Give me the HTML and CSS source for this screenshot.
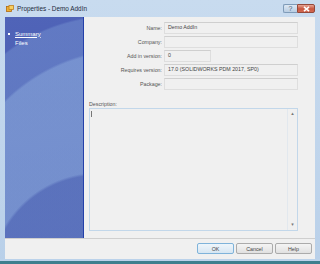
FILE: index.html
```html
<!DOCTYPE html>
<html lang="en">
<head>
  <meta charset="UTF-8">
  <title>Properties - Demo AddIn</title>
  <link rel="stylesheet" href="styles.css">
</head>
<body>

  <div class="window">
    <div class="titlebar">
      <svg class="app-icon" width="8" height="8" viewBox="0 0 8 8">
        <rect x="0.5" y="1.5" width="5" height="5" fill="#f0b030" stroke="#b06a10" stroke-width="0.8"/>
        <rect x="3" y="0.5" width="4.5" height="4" fill="#f7d060" stroke="#c08020" stroke-width="0.8"/>
      </svg>
      <span class="title">Properties - Demo AddIn</span>
      <div class="caption-buttons">
        <div class="cap-btn help-btn">?</div>
        <div class="cap-btn close-btn">
          <svg width="7" height="6" viewBox="0 0 7 6">
            <path d="M1 0.8 L6 5.2 M6 0.8 L1 5.2" stroke="#fff" stroke-width="1.6"/>
          </svg>
        </div>
      </div>
    </div>

    <div class="client">
      <div class="main">
        <div class="sidebar">
          <div class="nav-item active"><span class="bullet"></span><span class="link">Summary</span></div>
          <div class="nav-item"><span class="bullet empty"></span><span>Files</span></div>
        </div>

        <div class="content">
          <div class="row">
            <label>Name:</label>
            <div class="field">Demo AddIn</div>
          </div>
          <div class="row">
            <label>Company:</label>
            <div class="field"></div>
          </div>
          <div class="row">
            <label>Add in version:</label>
            <div class="field short">0</div>
          </div>
          <div class="row">
            <label>Requires version:</label>
            <div class="field">17.0 (SOLIDWORKS PDM 2017, SP0)</div>
          </div>
          <div class="row">
            <label>Package:</label>
            <div class="field"></div>
          </div>

          <div class="desc-label">Description:</div>
          <div class="desc-box">
            <div class="desc-text"><span class="caret"></span></div>
            <div class="scrollbar">
              <span class="arrow">&#9652;</span>
              <span class="arrow">&#9662;</span>
            </div>
          </div>
        </div>
      </div>

      <div class="footer">
        <button class="btn default">OK</button>
        <button class="btn">Cancel</button>
        <button class="btn">Help</button>
      </div>
    </div>
    <div class="bottom-frame"></div>
  </div>

</body>
</html>
```

FILE: styles.css
```css
html, body {
  margin: 0;
  padding: 0;
  width: 320px;
  height: 264px;
  overflow: hidden;
  font-family: 'Liberation Sans', 'DejaVu Sans', sans-serif;
}

.window {
  width: 320px;
  height: 264px;
  display: flex;
  flex-direction: column;
  background: linear-gradient(#c8dbef, #b9d0e9);
}

/* Title bar */
.titlebar {
  height: 17px;
  display: flex;
  align-items: center;
  padding-left: 6px;
  box-sizing: border-box;
}

.app-icon {
  margin-right: 3px;
}

.title {
  font-size: 6.4px;
  color: #1e2b3c;
}

.caption-buttons {
  margin-left: auto;
  display: flex;
  align-self: flex-start;
  margin-top: 4px;
  margin-right: 5px;
}

.cap-btn {
  height: 9px;
  display: flex;
  align-items: center;
  justify-content: center;
  box-sizing: border-box;
  border: 1px solid #7f9bb8;
  font-size: 7px;
  line-height: 1;
}

.help-btn {
  width: 14px;
  background: linear-gradient(#dde8f4, #b9cde2);
  color: #4a5f78;
  border-radius: 2px 0 0 2px;
  border-right: none;
}

.close-btn {
  width: 18px;
  background: linear-gradient(#e6a596, #c8563f 55%, #d36a52);
  border-color: #94483a;
  border-radius: 0 2px 2px 0;
}

/* Client area */
.client {
  flex: 1;
  margin: 0 5px;
  display: flex;
  flex-direction: column;
  background: #f0f0f0;
}

.main {
  height: 221px;
  display: flex;
}

.sidebar {
  width: 79px;
  border-right: 1px solid #2440a8;
  padding-top: 12px;
  box-sizing: border-box;
  background:
    radial-gradient(circle at 120% 120%, rgba(70,90,175,0.55) 0 38%, transparent 39%),
    radial-gradient(circle at 160% 95%, rgba(140,170,220,0.5) 0 72%, transparent 73%),
    radial-gradient(circle at 140% 80%, rgba(120,150,210,0.45) 0 85%, transparent 86%),
    linear-gradient(170deg, #5064b8, #4a5db3 50%, #4457ad);
}

.nav-item {
  display: flex;
  align-items: center;
  height: 9px;
  font-size: 6px;
  color: #fff;
}

.bullet {
  width: 2px;
  height: 2px;
  background: #fff;
  margin: 0 5px 0 3px;
}

.bullet.empty {
  background: transparent;
}

.link {
  text-decoration: underline;
}

.content {
  flex: 1;
  padding: 5px 17px 0 5px;
  display: flex;
  flex-direction: column;
}

.row {
  display: flex;
  align-items: center;
  height: 12px;
  margin-bottom: 2px;
}

.row label {
  width: 73px;
  text-align: right;
  font-size: 5.3px;
  color: #555;
  padding-right: 2px;
}

.field {
  flex: 1;
  height: 12px;
  box-sizing: border-box;
  border: 1px solid #dedede;
  border-top-color: #cfcfcf;
  font-size: 5.3px;
  color: #444;
  padding: 1px 3px;
}

.field.short {
  flex: none;
  width: 47px;
}

.desc-label {
  margin-top: 9px;
  font-size: 5.3px;
  color: #555;
  height: 7px;
}

.desc-box {
  height: 121px;
  border: 1px solid #c2d7ea;
  display: flex;
}

.desc-text {
  flex: 1;
  padding: 2px 1px;
}

.caret {
  display: block;
  width: 1px;
  height: 6px;
  background: #777;
}

.scrollbar {
  width: 9px;
  border-left: 1px solid #e2e8ee;
  display: flex;
  flex-direction: column;
  justify-content: space-between;
  align-items: center;
  padding: 2px 0 3px;
}

.arrow {
  font-size: 5px;
  color: #777;
  line-height: 1;
}

/* Footer */
.footer {
  flex: 1;
  border-top: 1px solid #cfcfcf;
  display: flex;
  justify-content: flex-end;
  align-items: flex-start;
  padding: 4px 3px 0 0;
  gap: 2px;
}

.btn {
  width: 37px;
  height: 11px;
  padding: 0;
  font-family: inherit;
  font-size: 5.3px;
  color: #444;
  border: 1px solid #ababab;
  border-radius: 2px;
  background: linear-gradient(#f4f4f4, #ebebeb 50%, #e0e0e0);
}

.btn.default {
  border-color: #7fb3da;
  background: linear-gradient(#eef5fb, #e3eef7 50%, #d6e6f2);
}

.bottom-frame {
  height: 5px;
  background: linear-gradient(#bbd2ea 0 2px, #3e7f8e 2px);
}
```
